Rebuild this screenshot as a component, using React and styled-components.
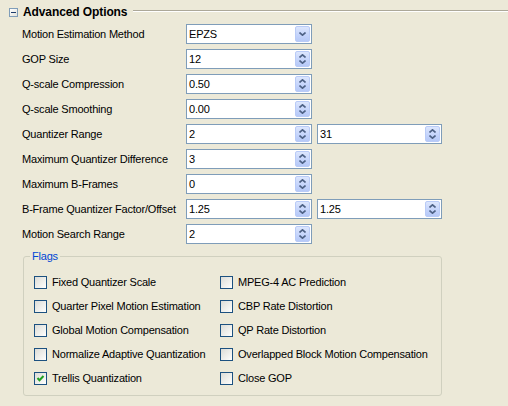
import React from 'react';
import styled, { createGlobalStyle } from 'styled-components';

const Global = createGlobalStyle`
  html, body { margin: 0; padding: 0; background: #ECE9D8; }
  body { font-family: "Liberation Sans", Arial, sans-serif; font-size: 11px; color: #000; letter-spacing: -0.2px; }
`;

const Page = styled.div`
  width: 508px;
  height: 406px;
  overflow: hidden;
  background: #ECE9D8;
`;

const Header = styled.div`
  display: flex;
  align-items: center;
  height: 24px;
  padding-left: 9px;
`;

const Toggle = styled.div`
  width: 9px;
  height: 9px;
  box-sizing: border-box;
  border: 1px solid #7F9DB9;
  background: linear-gradient(135deg, #FFFFFF 0%, #E3E3DB 100%);
  display: flex;
  align-items: center;
  justify-content: center;
  &::after {
    content: '';
    width: 5px;
    height: 1px;
    background: #1E3D6B;
  }
`;

const Title = styled.div`
  margin-left: 5px;
  font-weight: bold;
  font-size: 12px;
  letter-spacing: -0.1px;
`;

const Rule = styled.div`
  flex: 1;
  align-self: flex-start;
  margin-top: 10px;
  margin-left: 6px;
  height: 0;
  border-top: 1px solid #ACA899;
  border-bottom: 1px solid #FFFFFF;
`;

const Rows = styled.div`
  display: flex;
  flex-direction: column;
  gap: 5px;
  padding-left: 22px;
`;

const Row = styled.div`
  display: flex;
  align-items: center;
  height: 20px;
`;

const Label = styled.div`
  width: 164px;
  white-space: nowrap;
`;

const Field = styled.div`
  width: ${p => p.$w || 126}px;
  height: 20px;
  box-sizing: border-box;
  border: 1px solid #7F9DB9;
  background: #FFFFFF;
  display: flex;
  align-items: stretch;
  & + & { margin-left: 5px; }
`;

const FieldText = styled.div`
  flex: 1;
  padding-left: 2px;
  display: flex;
  align-items: center;
`;

const Btn = styled.div`
  width: 15px;
  margin: 1px;
  box-sizing: border-box;
  border: 1px solid #B9CBF7;
  border-radius: 2px;
  background: linear-gradient(180deg, #DCE6FD 0%, #C3D3FB 60%, #B6C9F7 100%);
  display: flex;
  flex-direction: column;
  align-items: center;
  justify-content: center;
  gap: ${p => (p.$spin ? 2 : 0)}px;
`;

const Chevron = ({ up }) => (
  <svg width="7" height="4" viewBox="0 0 7 4">
    <path
      d={up ? 'M0.5 3.5 L3.5 0.8 L6.5 3.5' : 'M0.5 0.5 L3.5 3.2 L6.5 0.5'}
      fill="none"
      stroke="#4D6185"
      strokeWidth="1.6"
    />
  </svg>
);

const Combo = ({ value }) => (
  <Field>
    <FieldText>{value}</FieldText>
    <Btn>
      <Chevron />
    </Btn>
  </Field>
);

const Spin = ({ value, w }) => (
  <Field $w={w}>
    <FieldText>{value}</FieldText>
    <Btn $spin>
      <Chevron up />
      <Chevron />
    </Btn>
  </Field>
);

const Group = styled.fieldset`
  margin: 6px 0 0 23px;
  width: 419px;
  box-sizing: border-box;
  border: 1px solid #D0D0BF;
  border-radius: 3px;
  padding: 8px 0 5px 10px;
`;

const Legend = styled.legend`
  color: #0046D5;
  line-height: 12px;
  padding: 0 2px;
  margin-left: -4px;
`;

const FlagGrid = styled.div`
  display: grid;
  grid-template-columns: 186px auto;
  grid-auto-rows: 24px;
`;

const Flag = styled.label`
  display: flex;
  align-items: center;
  gap: 5px;
  white-space: nowrap;
`;

const Box = styled.span`
  width: 13px;
  height: 13px;
  box-sizing: border-box;
  border: 1px solid #1C5180;
  background: linear-gradient(135deg, #DCDCD7 0%, #F4F4F1 70%, #FFFFFF 100%);
  display: flex;
  align-items: center;
  justify-content: center;
`;

const Check = () => (
  <svg width="9" height="9" viewBox="0 0 9 9">
    <path d="M1.5 4 L3.5 6.3 L7.5 2" fill="none" stroke="#21A121" strokeWidth="2" />
  </svg>
);

const CheckBox = ({ checked, children }) => (
  <Flag>
    <Box>{checked && <Check />}</Box>
    {children}
  </Flag>
);

const flags = [
  ['Fixed Quantizer Scale', false],
  ['MPEG-4 AC Prediction', false],
  ['Quarter Pixel Motion Estimation', false],
  ['CBP Rate Distortion', false],
  ['Global Motion Compensation', false],
  ['QP Rate Distortion', false],
  ['Normalize Adaptive Quantization', false],
  ['Overlapped Block Motion Compensation', false],
  ['Trellis Quantization', true],
  ['Close GOP', false],
];

export default function App() {
  return (
    <Page>
      <Global />
      <Header>
        <Toggle />
        <Title>Advanced Options</Title>
        <Rule />
      </Header>
      <Rows>
        <Row>
          <Label>Motion Estimation Method</Label>
          <Combo value="EPZS" />
        </Row>
        <Row>
          <Label>GOP Size</Label>
          <Spin value="12" />
        </Row>
        <Row>
          <Label>Q-scale Compression</Label>
          <Spin value="0.50" />
        </Row>
        <Row>
          <Label>Q-scale Smoothing</Label>
          <Spin value="0.00" />
        </Row>
        <Row>
          <Label>Quantizer Range</Label>
          <Spin value="2" />
          <Spin value="31" w={125} />
        </Row>
        <Row>
          <Label>Maximum Quantizer Difference</Label>
          <Spin value="3" />
        </Row>
        <Row>
          <Label>Maximum B-Frames</Label>
          <Spin value="0" />
        </Row>
        <Row>
          <Label>B-Frame Quantizer Factor/Offset</Label>
          <Spin value="1.25" />
          <Spin value="1.25" w={125} />
        </Row>
        <Row>
          <Label>Motion Search Range</Label>
          <Spin value="2" />
        </Row>
      </Rows>
      <Group>
        <Legend>Flags</Legend>
        <FlagGrid>
          {flags.map(([name, checked]) => (
            <CheckBox key={name} checked={checked}>
              {name}
            </CheckBox>
          ))}
        </FlagGrid>
      </Group>
    </Page>
  );
}
